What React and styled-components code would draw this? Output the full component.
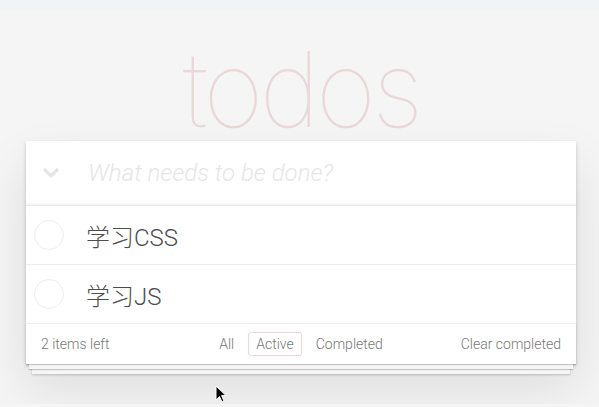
import React from 'react';
import styled, { createGlobalStyle } from 'styled-components';

const GlobalStyle = createGlobalStyle`
  html, body {
    margin: 0;
    padding: 0;
  }
  body {
    background: #f5f5f5;
    color: #4d4d4d;
    font-family: "Helvetica Neue", Roboto, "Noto Sans CJK SC", sans-serif;
    font-weight: 300;
    -webkit-font-smoothing: antialiased;
  }
`;

const TopStrip = styled.div`
  height: 10px;
  background: #f1f4f5;
`;

const Page = styled.div`
  position: relative;
  width: 550px;
  margin-left: 26px;
  padding-bottom: 40px;
`;

const Title = styled.h1`
  margin: 0;
  height: 114px;
  padding-top: 17px;
  font-family: "Helvetica Neue", Inter, sans-serif;
  font-size: 104px;
  font-weight: 100;
  line-height: 124px;
  text-align: center;
  color: rgba(175, 47, 47, 0.15);
  letter-spacing: -4px;
`;

const TodoApp = styled.section`
  position: relative;
  background: #fff;
  box-shadow: 0 2px 4px 0 rgba(0, 0, 0, 0.2), 0 25px 50px 0 rgba(0, 0, 0, 0.1);
`;

const Header = styled.header`
  display: flex;
  align-items: center;
  height: 64px;
  border-bottom: 1px solid #e6e6e6;
  box-shadow: inset 0 -2px 1px rgba(0, 0, 0, 0.03);
`;

const ToggleAll = styled.span`
  display: flex;
  align-items: center;
  justify-content: center;
  width: 50px;
  height: 100%;
  color: #e6e6e6;
  svg {
    width: 18px;
    height: 12px;
  }
`;

const NewTodo = styled.input`
  flex: 1;
  margin-left: 10px;
  border: none;
  outline: none;
  background: transparent;
  font-family: inherit;
  font-size: 24px;
  font-weight: 300;
  color: #4d4d4d;
  &::placeholder {
    font-style: italic;
    color: #e6e6e6;
  }
`;

const List = styled.ul`
  margin: 0;
  padding: 0;
  list-style: none;
`;

const Item = styled.li`
  display: flex;
  align-items: center;
  height: 58px;
  border-bottom: 1px solid #ededed;
`;

const Check = styled.span`
  box-sizing: border-box;
  width: 30px;
  height: 30px;
  margin-left: 8px;
  border: 1px solid #ededed;
  border-radius: 50%;
`;

const Label = styled.label`
  margin-left: 22px;
  font-size: 24px;
  font-weight: 300;
  color: #4d4d4d;
`;

const Footer = styled.footer`
  position: relative;
  display: grid;
  grid-template-columns: 1fr auto 1fr;
  align-items: center;
  height: 40px;
  padding: 0 15px;
  font-size: 14px;
  color: #777;

  &::before {
    content: '';
    position: absolute;
    right: 0;
    bottom: 0;
    left: 0;
    height: 40px;
    box-shadow: 0 1px 1px rgba(0, 0, 0, 0.2), 0 8px 0 -3px #f6f6f6,
      0 9px 1px -3px rgba(0, 0, 0, 0.2), 0 16px 0 -6px #f6f6f6,
      0 17px 2px -6px rgba(0, 0, 0, 0.2);
    z-index: 0;
  }
`;

const Count = styled.span`
  position: relative;
  z-index: 1;
`;

const Filters = styled.ul`
  position: relative;
  z-index: 1;
  display: flex;
  margin: 0;
  padding: 0;
  list-style: none;
`;

const Filter = styled.a`
  display: block;
  margin: 0 3px;
  padding: 3px 7px;
  border: 1px solid ${p => (p.$selected ? 'rgba(175, 47, 47, 0.2)' : 'transparent')};
  border-radius: 3px;
  color: inherit;
  text-decoration: none;
`;

const Clear = styled.span`
  position: relative;
  z-index: 1;
  justify-self: end;
`;

const Cursor = styled.svg`
  position: absolute;
  left: 215px;
  top: 385px;
  width: 12px;
  height: 18px;
`;

function App() {
  const todos = ['学习CSS', '学习JS'];
  const filters = ['All', 'Active', 'Completed'];

  return (
    <>
      <GlobalStyle />
      <TopStrip />
      <Page>
        <Title>todos</Title>
        <TodoApp>
          <Header>
            <ToggleAll>
              <svg viewBox="0 0 18 12">
                <path d="M2 2 L9 9 L16 2" fill="none" stroke="currentColor" strokeWidth="3.2" />
              </svg>
            </ToggleAll>
            <NewTodo placeholder="What needs to be done?" readOnly />
          </Header>
          <List>
            {todos.map(t => (
              <Item key={t}>
                <Check />
                <Label>{t}</Label>
              </Item>
            ))}
          </List>
          <Footer>
            <Count>2 items left</Count>
            <Filters>
              {filters.map(f => (
                <li key={f}>
                  <Filter $selected={f === 'Active'}>{f}</Filter>
                </li>
              ))}
            </Filters>
            <Clear>Clear completed</Clear>
          </Footer>
        </TodoApp>
      </Page>
      <Cursor viewBox="0 0 12 18">
        <path d="M1 1 L1 15 L4.5 11.5 L7 17 L9 16 L6.6 10.6 L11 10.6 Z" fill="#000" stroke="#fff" strokeWidth="1" />
      </Cursor>
    </>
  );
}

export default App;
